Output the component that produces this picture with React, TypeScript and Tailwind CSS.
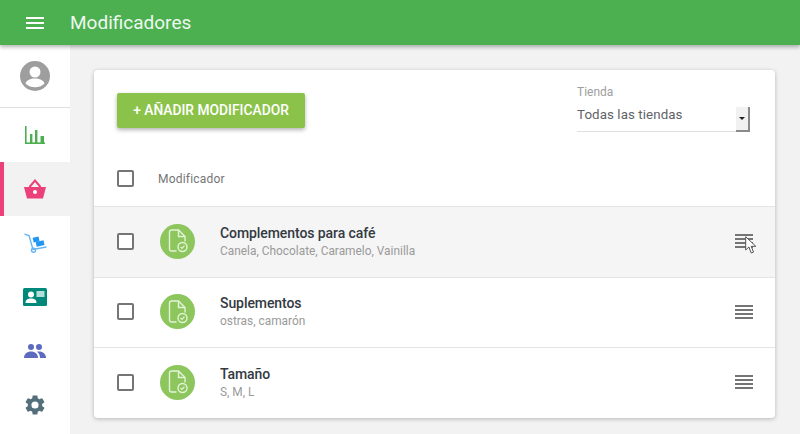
import React from "react";

const font = { fontFamily: '"Roboto", "Liberation Sans", sans-serif' };

function Chart() {
  return (
    <svg width="20" height="18" viewBox="0 0 20 18" fill="#4caf50">
      <rect x="0" y="0" width="1.600" height="18" />
      <rect x="0" y="16.400" width="20" height="1.600" />
      <rect x="5" y="8" width="2.400" height="9" />
      <rect x="10" y="4" width="2.400" height="13" />
      <rect x="15.500" y="10" width="3.500" height="7" />
    </svg>
  );
}

function Basket() {
  return (
    <svg width="22" height="20" viewBox="0 0 22 20">
      <path d="M0 8h22l-3 11.500H3z" fill="#ec407a" />
      <path d="M5.500 8L11 1.500 16.500 8" fill="none" stroke="#ec407a" strokeWidth="2" />
      <circle cx="11" cy="13" r="2" fill="#fff" />
    </svg>
  );
}

function Cart() {
  return (
    <svg width="23" height="20" viewBox="0 0 23 20">
      <path d="M0.500 1.200L5 2.500 9 16.500 22.500 14" fill="none" stroke="#64b5f6" strokeWidth="1.400" />
      <circle cx="9.500" cy="17.300" r="2" fill="none" stroke="#64b5f6" strokeWidth="1.400" />
      <rect x="9" y="4" width="6" height="5" fill="#2196f3" transform="rotate(-12 12 6)" />
      <rect x="12" y="8" width="8" height="5" fill="#2196f3" transform="rotate(-12 16 10)" />
    </svg>
  );
}

function IdCard() {
  return (
    <svg width="24" height="18" viewBox="0 0 24 18">
      <rect width="24" height="18" rx="1.500" fill="#00897b" />
      <circle cx="8" cy="6.500" r="3" fill="#fff" />
      <path d="M2.500 15c0-3.500 2.500-4.500 5.500-4.500s5.500 1 5.500 4.500z" fill="#fff" />
      <rect x="13.500" y="3" width="8" height="6" fill="#b2dfdb" />
    </svg>
  );
}

function People() {
  return (
    <svg width="22" height="14" viewBox="0 0 22 14" fill="#5c6bc0">
      <circle cx="7" cy="3" r="3" />
      <circle cx="15" cy="3" r="3" />
      <path d="M0 14c0-4 3-6.500 7-6.500s7 2.500 7 6.500z" />
      <path d="M15 7.500c4 0 7 2.500 7 6.500h-6c0-2.500-.8-4.500-3-6.200.6-.2 1.300-.3 2-.3z" />
    </svg>
  );
}

function Gear() {
  return (
    <svg width="24" height="24" viewBox="0 0 24 24" fill="#546e7a">
      <path d="M19.140 12.940c.04-.3.060-.61.060-.94s-.020-.64-.070-.94l2.030-1.580a.49.49 0 0 0 .12-.61l-1.920-3.320a.488.488 0 0 0-.59-.22l-2.390.96c-.5-.38-1.030-.7-1.620-.94l-.36-2.540a.484.484 0 0 0-.48-.41h-3.840c-.24 0-.43.17-.47.41l-.36 2.540c-.59.24-1.130.57-1.620.94l-2.390-.96c-.22-.08-.47 0-.59.22L2.740 8.870c-.12.21-.08.47.12.61l2.030 1.580c-.05.3-.09.63-.09.94s.020.64.070.94l-2.030 1.580a.49.49 0 0 0-.12.61l1.920 3.320c.12.22.37.29.59.22l2.390-.96c.5.38 1.030.7 1.620.94l.36 2.540c.05.24.24.41.48.41h3.840c.24 0 .44-.17.47-.41l.36-2.540c.59-.24 1.130-.56 1.620-.94l2.390.96c.22.08.47 0 .59-.22l1.920-3.320c.12-.22.070-.47-.12-.61l-2.010-1.580zM12 15.600A3.600 3.600 0 1 1 12 8.400a3.600 3.600 0 0 1 0 7.200z" />
    </svg>
  );
}

function Profile() {
  return (
    <svg width="30" height="30" viewBox="0 0 30 30">
      <circle cx="15" cy="15" r="15" fill="#9e9e9e" />
      <circle cx="15" cy="11" r="5.500" fill="#fff" />
      <path d="M5.500 22.500c1-3.500 5-5 9.500-5s8.500 1.500 9.500 5c-2 2.300-5.500 3.800-9.500 3.800s-7.500-1.500-9.500-3.800z" fill="#fff" />
    </svg>
  );
}

function Checkbox() {
  return <div className="w-[17px] h-[17px] rounded-[2px] border-2 border-[#757575] bg-white" />;
}

function DocBadge() {
  return (
    <div className="w-[35px] h-[35px] rounded-full bg-[#8cc65d] flex items-center justify-center shrink-0">
      <svg width="20" height="24" viewBox="0 0 20 24" fill="none" stroke="#e4f3d8" strokeWidth="1.400">
        <path d="M8.500 22H3.500A2 2 0 0 1 1.500 20V3A2 2 0 0 1 3.500 1H10.500L17 7.500V12.500" />
        <path d="M10.500 1V7.500H17" />
        <circle cx="14.500" cy="18" r="4.500" />
        <path d="M12.500 18l1.500 1.500 2.500-2.800" strokeWidth="1.200" />
      </svg>
    </div>
  );
}

function Lines() {
  return (
    <div className="w-[18px] flex flex-col gap-[2px]">
      <div className="h-[2px] bg-[#757575]" />
      <div className="h-[2px] bg-[#757575]" />
      <div className="h-[2px] bg-[#757575]" />
      <div className="h-[2px] bg-[#757575]" />
    </div>
  );
}

function Row({
  title,
  sub,
  hover,
  h,
}: {
  title: string;
  sub: string;
  hover?: boolean;
  h: string;
}) {
  return (
    <div className={`flex items-center pl-[23px] pr-[22px] pb-[2px] border-t border-[#e4e4e4] ${h} ${hover ? "bg-[#f5f5f5]" : ""}`}>
      <Checkbox />
      <div className="ml-[26px]">
        <DocBadge />
      </div>
      <div className="ml-[25px] flex-1 pt-[2px]">
        <div className="text-[14px] leading-[18px] font-medium text-[#333a42] tracking-[-0.08px]">{title}</div>
        <div className="text-[11.9px] leading-[19px] text-[#9a9a9a]">{sub}</div>
      </div>
      <div className="relative">
        <Lines />
        {hover && (
          <svg className="absolute left-[10px] top-[2px]" width="12" height="18" viewBox="0 0 12 18">
            <path d="M0.700 0.700V14l3.200-3 2.300 6 2.300-.9-2.300-5.800h4.600z" fill="#fff" stroke="#555" strokeWidth="1" />
          </svg>
        )}
      </div>
    </div>
  );
}

export default function App() {
  return (
    <div className="w-[800px] h-[434px] overflow-hidden flex flex-col bg-[#f2f2f2]" style={font}>
      <header className="relative z-10 h-[45px] shrink-0 bg-[#4caf50] flex items-center shadow-[0_2px_4px_rgba(0,0,0,0.3)]">
        <div className="ml-[26px] w-[18px] flex flex-col gap-[3px]">
          <div className="h-[2px] bg-white" />
          <div className="h-[2px] bg-white" />
          <div className="h-[2px] bg-white" />
        </div>
        <div className="ml-[26px] text-[19px] text-[#eef8ee] leading-none">Modificadores</div>
      </header>
      <div className="flex flex-1 min-h-0">
        <aside className="w-[70px] shrink-0 bg-white flex flex-col">
          <div className="h-[63px] shrink-0 flex items-center justify-center border-b border-[#e0e0e0]">
            <Profile />
          </div>
          <div className="h-[54px] shrink-0 flex items-center justify-center"><Chart /></div>
          <div className="h-[54px] shrink-0 flex items-center justify-center bg-[#f2f2f2] border-l-[4px] border-[#ec407a] pr-[4px]"><Basket /></div>
          <div className="h-[54px] shrink-0 flex items-center justify-center"><Cart /></div>
          <div className="h-[54px] shrink-0 flex items-center justify-center"><IdCard /></div>
          <div className="h-[54px] shrink-0 flex items-center justify-center"><People /></div>
          <div className="h-[54px] shrink-0 flex items-center justify-center"><Gear /></div>
        </aside>
        <main className="flex-1 pl-[24px] pr-[25px] pt-[25px]">
          <div className="h-[348px] bg-white rounded-[4px] shadow-[0_1px_4px_rgba(0,0,0,0.25)] overflow-hidden flex flex-col">
            <div className="h-[69px] shrink-0 flex justify-between pl-[23px] pr-[25px] pt-[23px]">
              <div className="w-[188px] h-[35px] rounded-[2px] bg-[#8bc34a] text-white text-[13.8px] font-medium flex items-center justify-center shadow-[0_2px_4px_rgba(0,0,0,0.3)]">
                + AÑADIR MODIFICADOR
              </div>
              <div className="w-[173px] -mt-[8px]">
                <div className="text-[12px] leading-[14px] text-[#9e9e9e]">Tienda</div>
                <div className="mt-[2px] h-[31px] border-b border-[#e0e0e0] flex justify-between text-[13.33px] leading-[28px] text-[#5f6368] tracking-[0.08px]">
                  <span>Todas las tiendas</span>
                  <span className="w-[14px] h-[25px] mt-[6px] bg-[#f1f1f1] border-r-2 border-b-2 border-[#8a8a8a] flex items-center justify-center">
                    <svg width="6" height="3" viewBox="0 0 6 3"><path d="M0 0h6L3 3z" fill="#222" /></svg>
                  </span>
                </div>
              </div>
            </div>
            <div className="h-[67px] shrink-0 flex items-center pl-[23px] pt-[12px]">
              <Checkbox />
              <div className="ml-[24px] text-[12px] text-[#757575] tracking-[0.2px]">Modificador</div>
            </div>
            <Row title="Complementos para café" sub="Canela, Chocolate, Caramelo, Vainilla" hover h="h-[71px]" />
            <Row title="Suplementos" sub="ostras, camarón" h="h-[70px]" />
            <Row title="Tamaño" sub="S, M, L" h="h-[71px]" />
          </div>
        </main>
      </div>
    </div>
  );
}
